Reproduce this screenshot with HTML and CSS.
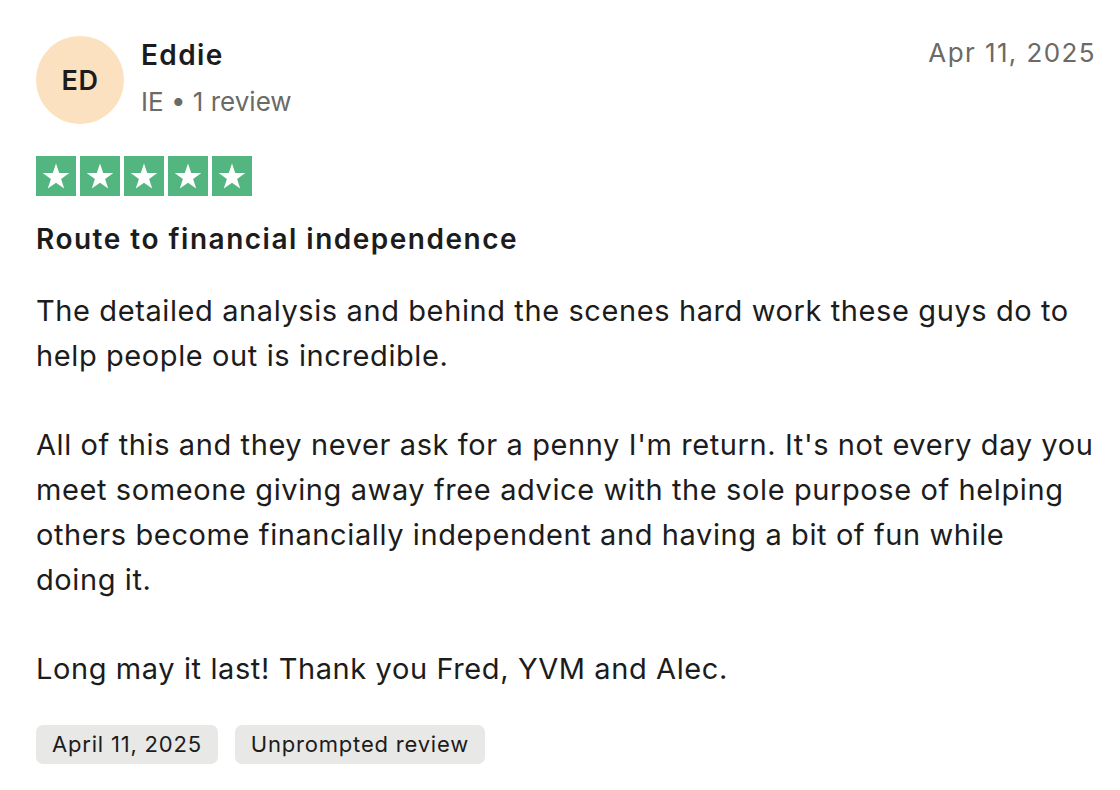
FILE: index.html
```html
<!DOCTYPE html>
<html lang="en">
<head>
<meta charset="utf-8">
<title>Review</title>
<link rel="stylesheet" href="styles.css">
</head>
<body>
<article class="review">
  <header class="head">
    <div class="avatar">ED</div>
    <div class="who">
      <div class="name">Eddie</div>
      <div class="meta">IE • 1 review</div>
    </div>
    <time class="date">Apr 11, 2025</time>
  </header>
  <div class="stars">
    <span class="star"><svg viewBox="0 0 40 40"><path d="M20 7.5l3.2 9.6h10.1l-8.2 5.9 3.1 9.6L20 26.7l-8.2 5.9 3.1-9.6-8.2-5.9h10.1z" fill="#fff"/></svg></span>
    <span class="star"><svg viewBox="0 0 40 40"><path d="M20 7.5l3.2 9.6h10.1l-8.2 5.9 3.1 9.6L20 26.7l-8.2 5.9 3.1-9.6-8.2-5.9h10.1z" fill="#fff"/></svg></span>
    <span class="star"><svg viewBox="0 0 40 40"><path d="M20 7.5l3.2 9.6h10.1l-8.2 5.9 3.1 9.6L20 26.7l-8.2 5.9 3.1-9.6-8.2-5.9h10.1z" fill="#fff"/></svg></span>
    <span class="star"><svg viewBox="0 0 40 40"><path d="M20 7.5l3.2 9.6h10.1l-8.2 5.9 3.1 9.6L20 26.7l-8.2 5.9 3.1-9.6-8.2-5.9h10.1z" fill="#fff"/></svg></span>
    <span class="star"><svg viewBox="0 0 40 40"><path d="M20 7.5l3.2 9.6h10.1l-8.2 5.9 3.1 9.6L20 26.7l-8.2 5.9 3.1-9.6-8.2-5.9h10.1z" fill="#fff"/></svg></span>
  </div>
  <h2 class="title">Route to financial independence</h2>
  <div class="body">
    <p>The detailed analysis and behind the scenes hard work these guys do to<br>help people out is incredible.</p>
    <p>All of this and they never ask for a penny I'm return. It's not every day you<br>meet someone giving away free advice with the sole purpose of helping<br>others become financially independent and having a bit of fun while<br>doing it.</p>
    <p>Long may it last! Thank you Fred, YVM and Alec.</p>
  </div>
  <div class="tags">
    <span class="tag">April 11, 2025</span>
    <span class="tag">Unprompted review</span>
  </div>
</article>
</body>
</html>
```
FILE: styles.css
```css
html, body {
  margin: 0;
  background: #ffffff;
}
body {
  font-family: Inter, "Noto Sans", sans-serif;
  color: #1c1c1c;
}
.review {
  padding: 36px 24px 0 36px;
}
.head {
  display: flex;
  align-items: flex-start;
}
.avatar {
  width: 88px;
  height: 88px;
  border-radius: 50%;
  background: #fbe1c0;
  display: flex;
  align-items: center;
  justify-content: center;
  font-size: 27px;
  font-weight: 600;
  letter-spacing: 0.5px;
  color: #1c1c1c;
  flex: none;
}
.who {
  margin-left: 17px;
}
.name {
  font-size: 28px;
  line-height: 38px;
  font-weight: 600;
  letter-spacing: 1.4px;
}
.meta {
  margin-top: 9px;
  font-size: 26px;
  line-height: 38px;
  color: #6b6a66;
}
.date {
  margin-left: auto;
  font-size: 26px;
  line-height: 34px;
  letter-spacing: 1.4px;
  color: #6b6a66;
}
.stars {
  display: flex;
  gap: 4px;
  margin-top: 32px;
}
.star {
  width: 40px;
  height: 40px;
  background: #53b680;
  display: block;
}
.star svg {
  width: 40px;
  height: 40px;
  display: block;
}
.title {
  margin: 23px 0 0;
  font-size: 28px;
  line-height: 40px;
  font-weight: 600;
  letter-spacing: 1.5px;
}
.body {
  margin-top: 30px;
  margin-right: -24px;
}
.body p {
  margin: 0 0 44.8px;
  font-size: 29px;
  line-height: 44.8px;
  letter-spacing: 0.6px;
  white-space: nowrap;
}
.body p:last-child {
  margin-bottom: 0;
}
.tags {
  display: flex;
  gap: 17px;
  margin-top: 33px;
}
.tag {
  background: #e8e8e6;
  border-radius: 7px;
  padding: 0 16px;
  height: 39px;
  line-height: 39px;
  font-size: 22px;
  letter-spacing: 0.8px;
  color: #1c1c1c;
}
```
